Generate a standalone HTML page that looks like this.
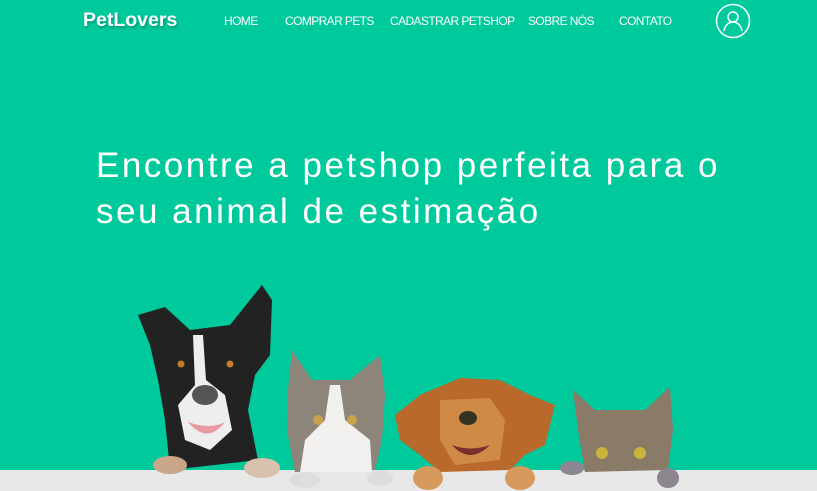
<!DOCTYPE html>
<html><head><meta charset="utf-8"><style>
*{margin:0;padding:0;box-sizing:border-box}
body{width:817px;height:491px;overflow:hidden;background:#00c99c;font-family:"Liberation Sans",sans-serif;position:relative;color:#fff}
.logo{position:absolute;left:83px;top:9px;font-size:19.5px;font-weight:bold;letter-spacing:0px;text-shadow:1px 2px 2px rgba(0,0,0,.25)}
.nav a{position:absolute;top:14px;font-size:12px;color:#fff;text-decoration:none;white-space:nowrap;letter-spacing:-0.6px}
h1{position:absolute;left:96px;top:143px;font-size:35px;font-weight:normal;line-height:46px;letter-spacing:2.5px}
.band{position:absolute;left:0;top:470px;width:817px;height:21px;background:#e8e8e8}
svg.p{position:absolute;left:0;top:0}
</style></head><body>
<div class="logo">PetLovers</div>
<div class="nav">
<a style="left:224px">HOME</a>
<a style="left:285px">COMPRAR PETS</a>
<a style="left:390px">CADASTRAR PETSHOP</a>
<a style="left:528px">SOBRE NÓS</a>
<a style="left:619px">CONTATO</a>
</div>
<svg style="position:absolute;left:715px;top:3px" width="36" height="36" viewBox="0 0 36 36"><circle cx="18" cy="18" r="16.5" fill="none" stroke="#fff" stroke-width="1.5"/><circle cx="18" cy="14" r="5" fill="none" stroke="#fff" stroke-width="1.5"/><path d="M9 28c1-6 5-9 9-9s8 3 9 9" fill="none" stroke="#fff" stroke-width="1.5"/></svg>
<h1>Encontre a petshop perfeita para o<br>seu animal de estimação</h1>
<div class="band"></div>
<svg class="p" width="817" height="491" viewBox="0 0 817 491">
<path d="M138 315 L165 307 L190 330 L230 325 L262 285 L272 300 L270 355 L255 375 L248 410 L258 460 L170 470 L165 420 L158 380 L150 345 Z" fill="#222"/>
<path d="M193 335 L203 335 L206 380 L225 395 L232 430 L210 450 L185 440 L178 405 L195 385 Z" fill="#eee"/>
<ellipse cx="205" cy="395" rx="13" ry="10" fill="#555"/>
<path d="M188 422 Q207 445 225 422 Q210 430 188 422Z" fill="#e89aa0"/>
<circle cx="181" cy="364" r="3.5" fill="#c47a2a"/><circle cx="230" cy="364" r="3.5" fill="#c47a2a"/>
<ellipse cx="170" cy="465" rx="17" ry="9" fill="#c9a58a"/><ellipse cx="262" cy="468" rx="18" ry="10" fill="#d9c2ad"/>
<path d="M292 350 L312 380 L350 380 L380 355 L385 395 L382 440 L375 470 L295 472 L287 430 L288 390 Z" fill="#8d857a"/>
<path d="M330 385 L340 385 L345 420 L370 440 L372 472 L300 472 L305 440 L325 420 Z" fill="#f2f0ee"/>
<circle cx="318" cy="420" r="5" fill="#c9a24b"/><circle cx="352" cy="420" r="5" fill="#c9a24b"/>
<ellipse cx="305" cy="480" rx="15" ry="8" fill="#ddd"/><ellipse cx="380" cy="478" rx="13" ry="8" fill="#ddd"/>
<path d="M395 415 L420 395 L460 378 L500 380 L530 395 L555 405 L545 445 L525 455 L510 470 L440 472 L420 455 L400 440 Z" fill="#b8692b"/>
<path d="M440 400 L490 398 L505 420 L500 460 L455 465 L440 440 Z" fill="#d08a45"/>
<ellipse cx="468" cy="418" rx="9" ry="7" fill="#332"/>
<path d="M452 445 Q470 465 490 445 Q470 452 452 445Z" fill="#7a2e2e"/>
<ellipse cx="428" cy="478" rx="15" ry="12" fill="#d69a5c"/><ellipse cx="520" cy="478" rx="15" ry="12" fill="#d69a5c"/>
<path d="M573 390 L595 410 L645 410 L670 387 L673 430 L668 470 L585 472 L578 430 Z" fill="#8a7b68"/>
<circle cx="602" cy="453" r="6" fill="#c8b43a"/><circle cx="640" cy="453" r="6" fill="#c8b43a"/>
<ellipse cx="572" cy="468" rx="12" ry="7" fill="#8d8590"/><ellipse cx="668" cy="478" rx="11" ry="10" fill="#8d8590"/>
</svg>
</body></html>
